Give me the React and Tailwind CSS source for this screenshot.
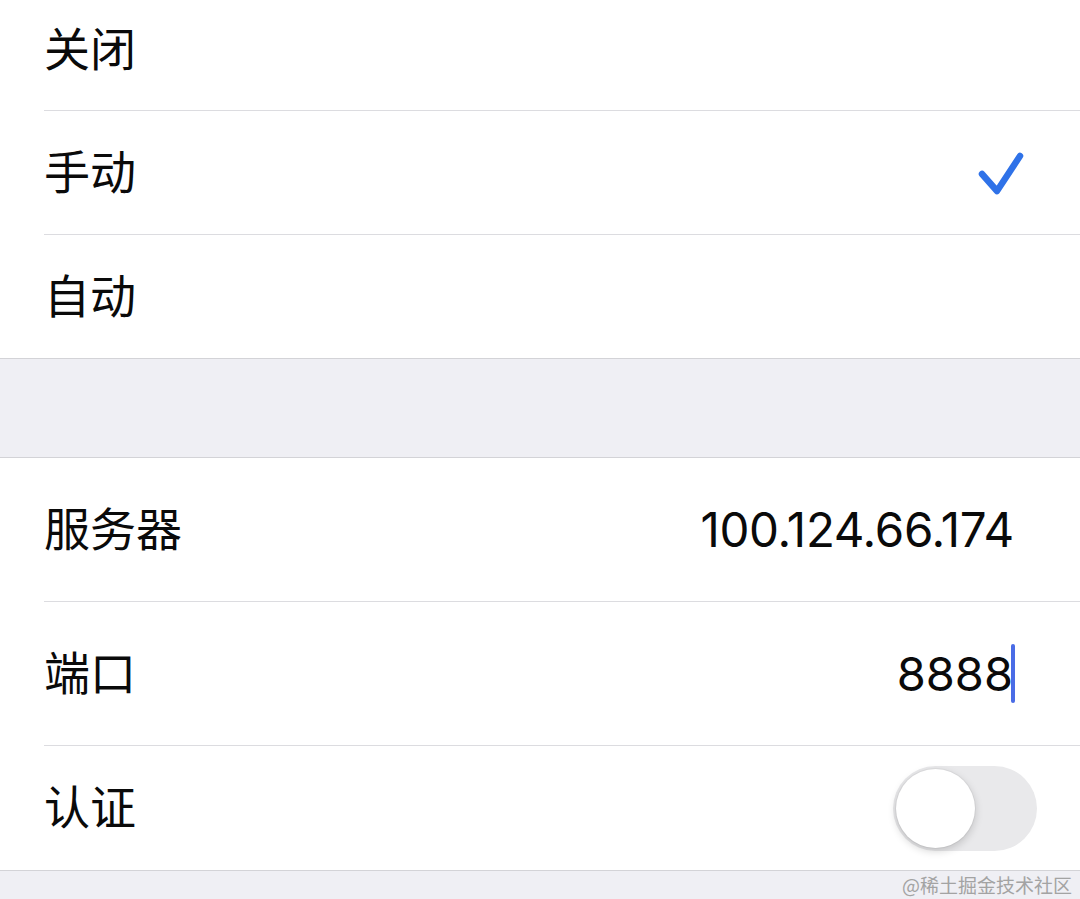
import React from 'react';

const FONT = "font-['Inter','Noto_Sans_CJK_SC',sans-serif]";

function Row({ label, height, last, children, pr = 'pr-[66px]', labelClass = 'mb-[8px]' }) {
  return (
    <div className="pl-[44px] bg-white">
      <div
        className={`flex items-center justify-between ${pr} ${last ? '' : 'border-b border-[#dcdce0]'} ${height}`}
      >
        <span className={`text-[46px] leading-none text-[#0a0a0a] font-['Noto_Sans_CJK_SC',sans-serif] ${labelClass}`}>
          {label}
        </span>
        {children}
      </div>
    </div>
  );
}

export default function App() {
  return (
    <div className={`relative w-[1080px] h-[899px] overflow-hidden bg-[#efeff4] ${FONT}`}>
      {/* Mode group */}
      <div className="bg-white border-b border-[#d3d3d7]">
        <Row label="关闭" height="h-[111px]" labelClass="mb-[18px]" />
        <Row label="手动" height="h-[124px]" pr="pr-[56px]">
          <svg width="46" height="46" viewBox="0 0 46 46" fill="none">
            <polyline
              points="4,24 19,41 42,6"
              stroke="#2f72e8"
              strokeWidth="6.5"
              strokeLinecap="round"
              strokeLinejoin="round"
            />
          </svg>
        </Row>
        <Row label="自动" height="h-[123px]" last />
      </div>

      {/* spacer */}
      <div className="h-[98px]" />

      {/* Proxy group */}
      <div className="bg-white border-t border-b border-[#d3d3d7]">
        <Row label="服务器" height="h-[144px]">
          <span className="text-[47.5px] leading-none text-[#0a0a0a] tracking-[-0.3px]">100.124.66.174</span>
        </Row>
        <Row label="端口" height="h-[144px]" pr="pr-[65px]">
          <span className="flex items-center text-[47px] leading-none text-[#0a0a0a]">
            8888
            <span className="inline-block w-[4px] h-[59px] rounded-full bg-[#4a6ce6] -ml-[2px]" />
          </span>
        </Row>
        <Row label="认证" height="h-[124px]" last pr="pr-[43px]">
          <div className="w-[144px] h-[85px] rounded-full bg-[#e9e9eb] p-[3px] flex items-center">
            <div className="w-[79px] h-[79px] rounded-full bg-white shadow-[0_3px_8px_rgba(0,0,0,0.18),0_0_0_1px_rgba(0,0,0,0.04)]" />
          </div>
        </Row>
      </div>

      {/* watermark */}
      <div className="absolute right-[8px] bottom-[5px] text-[19px] leading-none text-[#a3a3a3] font-['Noto_Sans_CJK_SC',sans-serif]">
        @稀土掘金技术社区
      </div>
    </div>
  );
}
